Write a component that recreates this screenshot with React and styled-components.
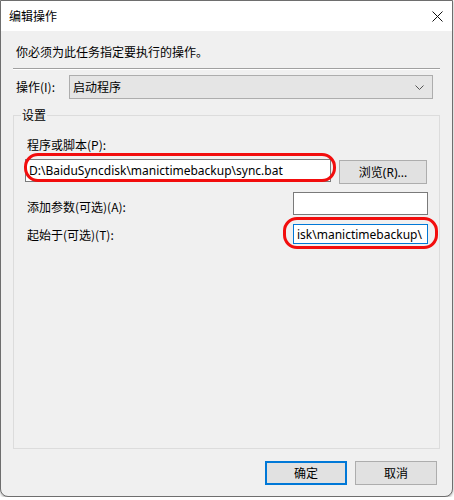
import React from "react";
import styled, { createGlobalStyle } from "styled-components";

const GlobalStyle = createGlobalStyle`
  html, body {
    margin: 0;
    padding: 0;
    background: #ffffff;
  }
  body {
    font-family: "Noto Sans", "Noto Sans CJK SC", sans-serif;
    font-size: 12px;
    color: #000;
  }
`;

const Window = styled.div`
  width: 453px;
  height: 497px;
  box-sizing: border-box;
  border: 1px solid #6e6e6e;
  border-radius: 0 0 8px 8px;
  background: #f0f0f0;
  display: flex;
  flex-direction: column;
  overflow: hidden;
  box-shadow: 0 1px 3px rgba(0, 0, 0, 0.35);
`;

const TitleBar = styled.div`
  height: 30px;
  flex: none;
  background: #ffffff;
  display: flex;
  align-items: center;
  justify-content: space-between;
  padding: 0 9px 0 8px;
`;

const Title = styled.span`
  font-family: "Noto Sans CJK SC", sans-serif;
  font-size: 12px;
  line-height: 16px;
`;

const Body = styled.div`
  flex: 1;
  display: flex;
  flex-direction: column;
  padding: 13px 12px 11px 12px;
`;

const Text = styled.div`
  font-family: "Noto Sans CJK SC", sans-serif;
  font-size: 12px;
  line-height: 16px;
  white-space: nowrap;
  padding-left: ${(p) => p.$indent || 0}px;
  margin-top: ${(p) => p.$top || 0}px;
  width: ${(p) => (p.$width ? `${p.$width}px` : "auto")};
  flex: none;
`;

const Separator = styled.div`
  margin-top: 8px;
  height: 1px;
  background: #a0a0a0;
  border-bottom: 1px solid #ffffff;
`;

const ActionRow = styled.div`
  margin-top: 5px;
  display: flex;
  align-items: center;
  margin-right: 7px;
`;

const Select = styled.div`
  flex: 1;
  height: 24px;
  box-sizing: border-box;
  border: 1px solid #adadad;
  background: #e5e5e5;
  display: flex;
  align-items: center;
  justify-content: space-between;
  padding: 0 8px 0 3px;
`;

const Group = styled.fieldset`
  flex: 1;
  margin: 8px 0 0 0;
  padding: 0;
  border: 1px solid #dcdcdc;
  display: flex;
  flex-direction: column;
  min-width: 0;
`;

const Legend = styled.legend`
  margin-left: 7px;
  padding: 0 1px;
  font-family: "Noto Sans CJK SC", sans-serif;
  font-size: 12px;
  line-height: 16px;
`;

const FieldRow = styled.div`
  display: flex;
  align-items: flex-start;
  margin-top: ${(p) => p.$top}px;
  padding-left: ${(p) => p.$left}px;
  padding-right: ${(p) => p.$right}px;
`;

const TextBox = styled.div`
  position: relative;
  box-sizing: border-box;
  width: ${(p) => p.$width}px;
  height: ${(p) => p.$height}px;
  background: #ffffff;
  border: 1px solid ${(p) => (p.$focused ? "#0078d7" : "#7a7a7a")};
  padding: 0 3px;
  display: flex;
  align-items: center;
  white-space: nowrap;
  font-family: "Noto Sans", "Noto Sans CJK SC", sans-serif;
  font-size: 12px;
  margin-left: ${(p) => (p.$push ? "auto" : "0")};
  flex: none;
`;

const Highlight = styled.div`
  position: absolute;
  left: ${(p) => p.$x}px;
  top: ${(p) => p.$y}px;
  width: ${(p) => p.$w}px;
  height: ${(p) => p.$h}px;
  box-sizing: border-box;
  border: 3px solid #f20d0d;
  border-radius: 14px;
  pointer-events: none;
`;

const Button = styled.div`
  width: ${(p) => p.$width || 82}px;
  height: 24px;
  box-sizing: border-box;
  background: #e1e1e1;
  border: ${(p) => (p.$primary ? "2px solid #0078d7" : "1px solid #adadad")};
  display: flex;
  align-items: center;
  justify-content: center;
  font-family: "Noto Sans", "Noto Sans CJK SC", sans-serif;
  font-size: 12px;
  margin-top: ${(p) => p.$top || 0}px;
  margin-left: ${(p) => p.$gap || 0}px;
  flex: none;
`;

const ButtonRow = styled.div`
  margin-top: 12px;
  margin-right: 3px;
  display: flex;
  justify-content: flex-end;
  gap: 8px;
`;

function CloseIcon() {
  return (
    <svg width="11" height="11" viewBox="0 0 11 11">
      <path d="M0.5 0.5 L10.5 10.5 M10.5 0.5 L0.5 10.5" stroke="#111" strokeWidth="1" />
    </svg>
  );
}

function Chevron() {
  return (
    <svg width="9" height="5" viewBox="0 0 9 5">
      <polyline points="0.5,0.5 4.5,4.5 8.5,0.5" fill="none" stroke="#555" strokeWidth="1" />
    </svg>
  );
}

export default function App() {
  return (
    <>
      <GlobalStyle />
      <Window>
        <TitleBar>
          <Title>编辑操作</Title>
          <CloseIcon />
        </TitleBar>
        <Body>
          <Text $indent={3}>你必须为此任务指定要执行的操作。</Text>
          <Separator />
          <ActionRow>
            <Text $indent={3} $width={53}>操作(I):</Text>
            <Select>
              <Text>启动程序</Text>
              <Chevron />
            </Select>
          </ActionRow>
          <Group>
            <Legend>设置</Legend>
            <Text $indent={13} $top={14}>程序或脚本(P):</Text>
            <FieldRow $top={6} $left={11} $right={12}>
              <TextBox $width={306} $height={23}>
                D:\BaiduSyncdisk\manictimebackup\sync.bat
                <Highlight $x={-2} $y={-7} $w={312} $h={29} />
              </TextBox>
              <Button $top={1} $gap={8} $width={88}>浏览(R)...</Button>
            </FieldRow>
            <FieldRow $top={8} $left={13} $right={11}>
              <Text $top={7}>添加参数(可选)(A):</Text>
              <TextBox $width={135} $height={23} $push />
            </FieldRow>
            <FieldRow $top={9} $left={13} $right={11}>
              <Text $top={3}>起始于(可选)(T):</Text>
              <TextBox $width={135} $height={20} $push $focused>
                isk\manictimebackup\
                <Highlight $x={-11} $y={-8} $w={155} $h={32} />
              </TextBox>
            </FieldRow>
          </Group>
          <ButtonRow>
            <Button $primary>确定</Button>
            <Button>取消</Button>
          </ButtonRow>
        </Body>
      </Window>
    </>
  );
}
